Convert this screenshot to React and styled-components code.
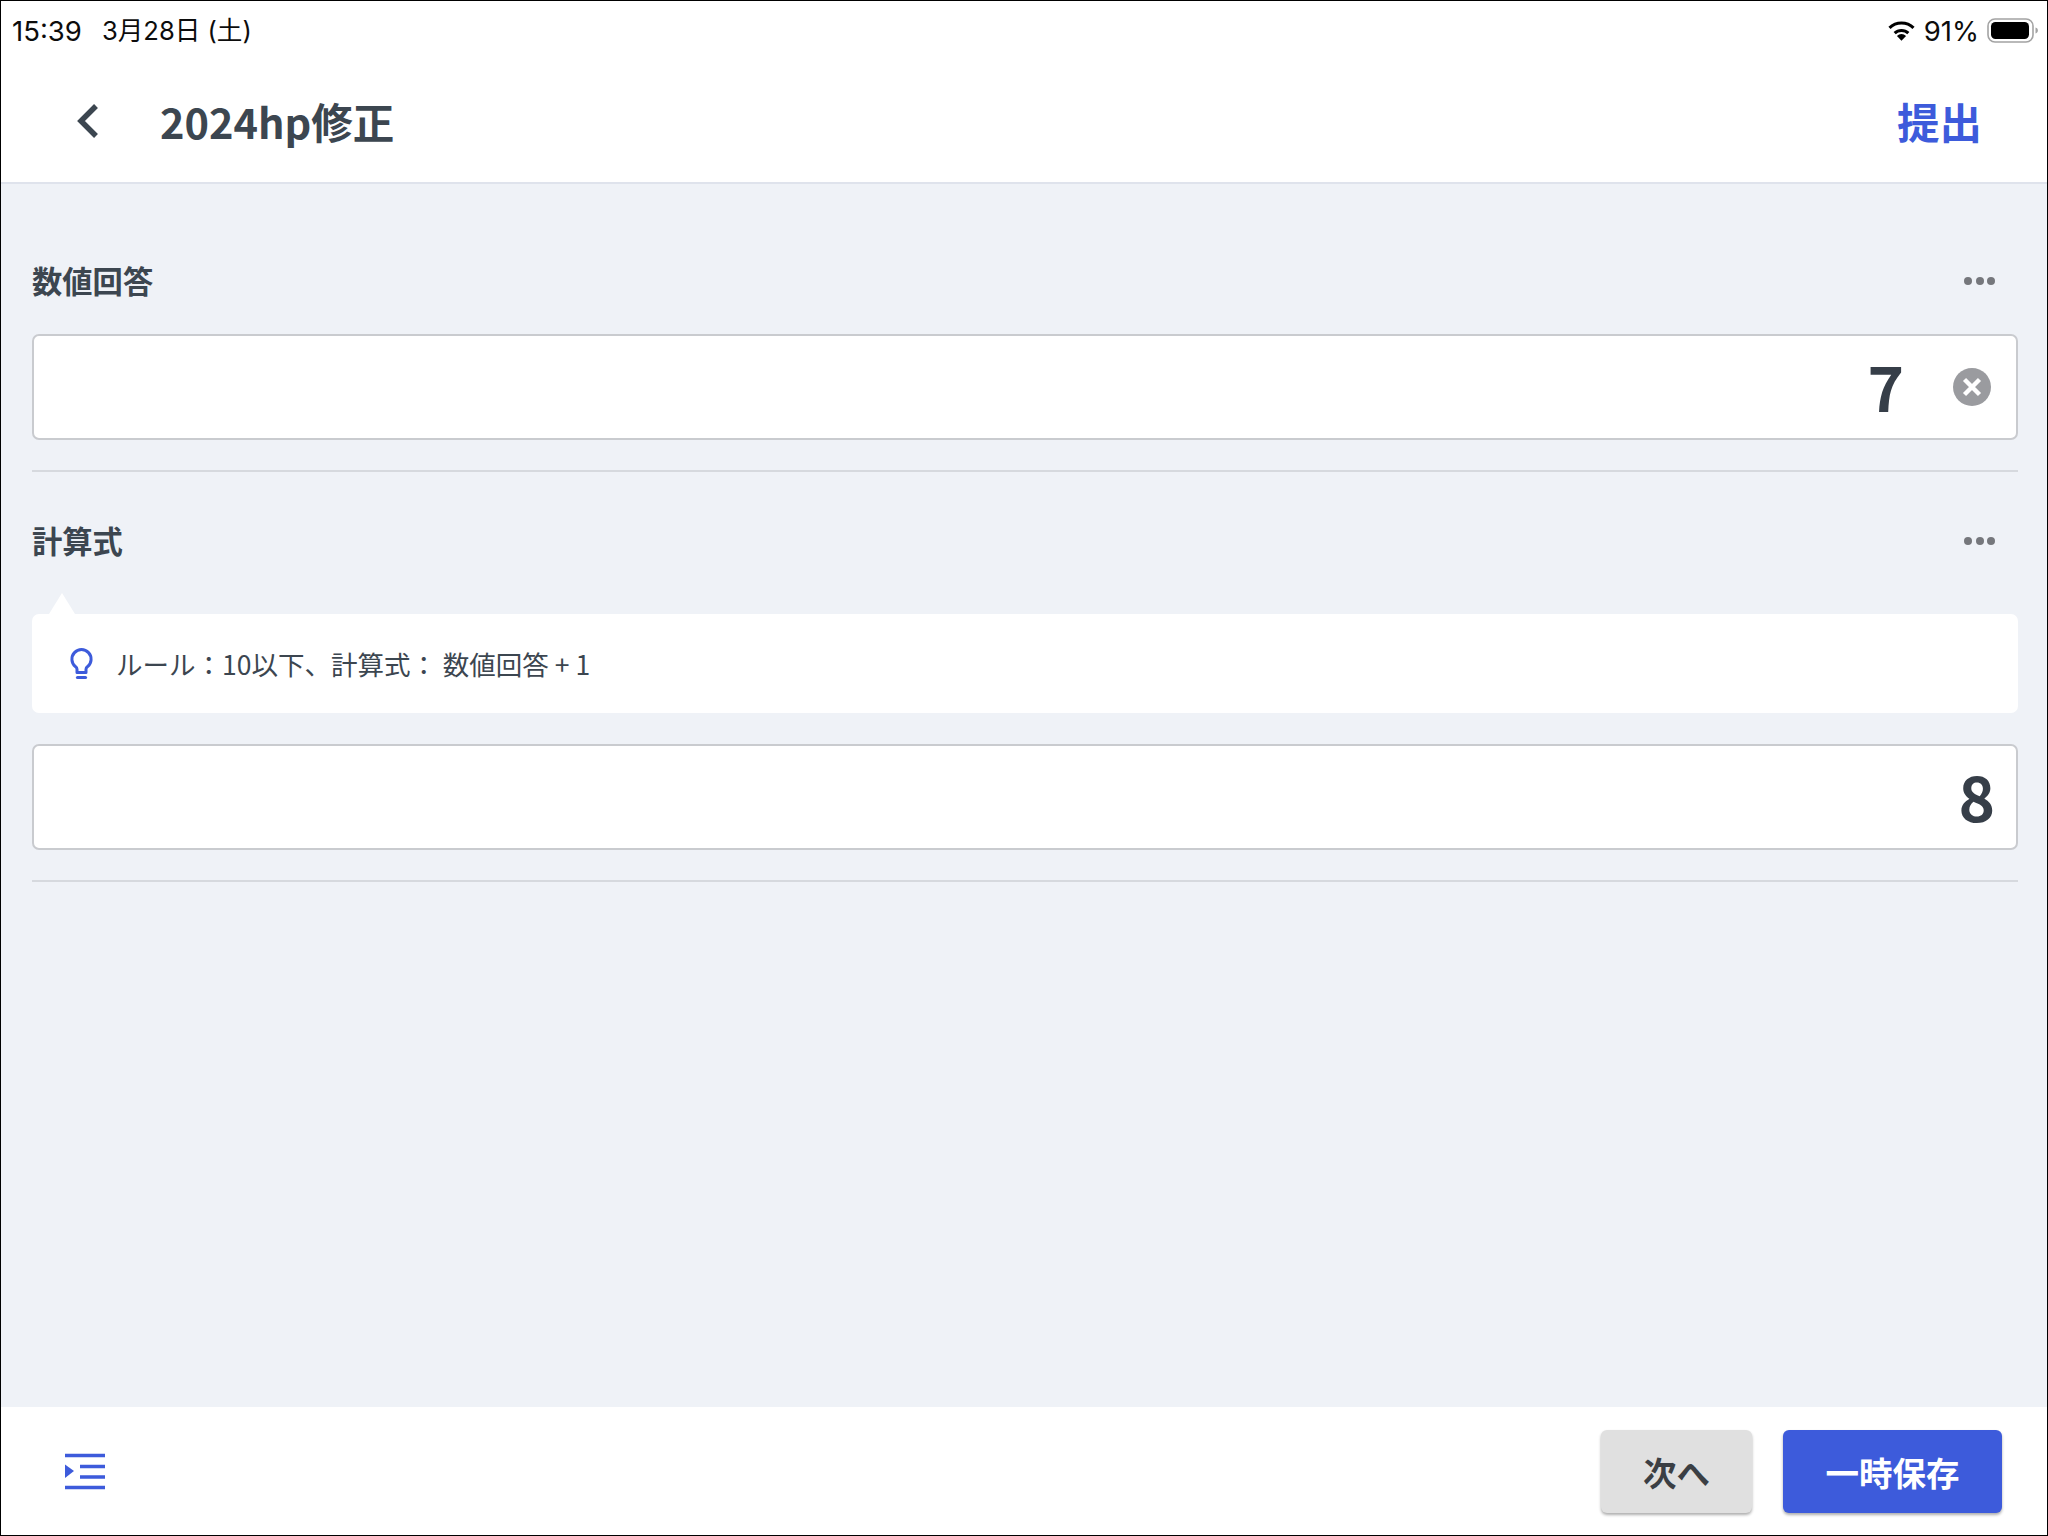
import React from "react";
import styled, { createGlobalStyle } from "styled-components";

const CJK = `"Noto Sans CJK JP", "Noto Sans", sans-serif`;
const INK = "#3c4650";
const BLUE = "#3d5bdb";

const Global = createGlobalStyle`
  html, body { margin: 0; padding: 0; background: #fff; }
  * { box-sizing: border-box; }
`;

const Frame = styled.div`
  width: 2048px;
  height: 1536px;
  border: 1px solid #000;
  display: flex;
  flex-direction: column;
  background: #eff2f7;
  font-family: ${CJK};
  color: ${INK};
  overflow: hidden;
`;

const Top = styled.header`
  height: 183px;
  flex: none;
  background: #fff;
  border-bottom: 2px solid #dfe3ec;
  display: flex;
  flex-direction: column;
`;

const StatusBar = styled.div`
  height: 59px;
  flex: none;
  display: flex;
  align-items: center;
  justify-content: space-between;
  padding: 0 8px 0 11px;
  font-family: Inter, "Noto Sans CJK JP", sans-serif;
  font-size: 27.5px;
  line-height: 34px;
  color: #0c0c0c;
`;

const StatusGroup = styled.div`
  display: flex;
  align-items: center;
  gap: ${(p) => p.$gap || 0}px;
`;

const DateText = styled.span`
  font-size: 25.6px;
  line-height: 34px;
`;

const NavBar = styled.div`
  flex: 1;
  display: flex;
  align-items: center;
  padding: 0 65px 1px 75px;
`;

const BackIcon = styled.svg`
  width: 24px;
  height: 36px;
  flex: none;
  margin-right: 60px;
`;

const Title = styled.h1`
  margin: 0;
  flex: 1;
  font-size: 41.5px;
  line-height: 56px;
  font-weight: 700;
`;

const Submit = styled.button`
  border: 0;
  padding: 0;
  background: none;
  font: 700 42.5px/56px ${CJK};
  color: ${BLUE};
`;

const Main = styled.main`
  flex: 1;
  padding: 0 29px 0 31px;
  display: flex;
  flex-direction: column;
`;

const Section = styled.section`
  padding: ${(p) => p.$top}px 0 30px;
  border-bottom: 2px solid #d6d9de;
`;

const LabelRow = styled.div`
  display: flex;
  align-items: center;
  justify-content: space-between;
  height: 44px;
  margin-bottom: ${(p) => p.$after}px;
`;

const Label = styled.div`
  font-size: 30.3px;
  line-height: 44px;
  font-weight: 700;
`;

const Dots = styled.svg`
  width: 34px;
  height: 10px;
  margin-right: 21px;
  margin-top: 1px;
`;

const Field = styled.div`
  height: 106px;
  background: #fff;
  border: 2px solid #c9cbcf;
  border-radius: 7px;
  display: flex;
  align-items: center;
  justify-content: flex-end;
  padding-right: ${(p) => p.$pad}px;
`;

const Value = styled.div`
  font-size: 62px;
  line-height: 80px;
  font-weight: 700;
  color: #363e48;
  margin-top: -4px;
`;

const Clear = styled.svg`
  width: 38px;
  height: 38px;
  margin-left: 49px;
  flex: none;
`;

const Tip = styled.div`
  position: relative;
  height: 99px;
  background: #fff;
  border-radius: 7px;
  margin-bottom: 31px;
  display: flex;
  align-items: center;
  gap: 21px;
  padding: 0 0 0 37px;
  font-size: 26.5px;
  font-weight: 400;
  color: ${INK};
  &::before {
    content: "";
    position: absolute;
    left: 17px;
    top: -21px;
    border-left: 13px solid transparent;
    border-right: 13px solid transparent;
    border-bottom: 21px solid #fff;
  }
`;

const BulbIcon = styled.svg`
  width: 26px;
  height: 34px;
  flex: none;
`;

const Footer = styled.footer`
  height: 128px;
  flex: none;
  background: #fff;
  display: flex;
  align-items: flex-start;
  justify-content: space-between;
  padding: 23px 45px 0 63px;
`;

const MenuIcon = styled.svg`
  width: 42px;
  height: 38px;
  margin-top: 22px;
`;

const Buttons = styled.div`
  display: flex;
  gap: 31px;
`;

const Btn = styled.button`
  height: 83px;
  width: ${(p) => p.$w}px;
  border: 0;
  border-radius: 6px;
  background: ${(p) => (p.$primary ? BLUE : "#e0e0e0")};
  color: ${(p) => (p.$primary ? "#fff" : "#3b3f44")};
  font: 700 33.5px/1 ${CJK};
  box-shadow: 0 2px 3px rgba(0, 0, 0, 0.32);
`;

const Wifi = () => (
  <svg width="29" height="21" viewBox="0 0 28 20">
    <path d="M14 20l-4.4-4.8a6.4 6.4 0 0 1 8.8 0z" fill="#000" />
    <path d="M7.4 12.6a9.6 9.6 0 0 1 13.2 0" fill="none" stroke="#000" strokeWidth="3" />
    <path d="M2.4 7.4a16.8 16.8 0 0 1 23.2 0" fill="none" stroke="#000" strokeWidth="3" />
  </svg>
);

const Battery = () => (
  <svg width="52" height="26" viewBox="0 0 52 26">
    <rect x="1" y="1" width="45" height="23" rx="7" fill="#fff" stroke="#a3a3a3" strokeWidth="1.6" />
    <rect x="4" y="4" width="38" height="17" rx="4.5" fill="#000" />
    <path d="M48.5 9.5c1.6.4 2.4 1.6 2.4 3s-.8 2.6-2.4 3z" fill="#a3a3a3" />
  </svg>
);

const MoreDots = () => (
  <Dots viewBox="0 0 34 10">
    <circle cx="5" cy="5" r="4" fill="#75777c" />
    <circle cx="17" cy="5" r="4" fill="#75777c" />
    <circle cx="28" cy="5" r="4" fill="#75777c" />
  </Dots>
);

const Bulb = () => (
  <BulbIcon viewBox="0 0 26 34">
    <path
      d="M8 25.5h9v-3.2c0-1.2.6-2 1.6-2.7a9.6 9.6 0 1 0-12.2 0c1 .7 1.6 1.5 1.6 2.7z"
      fill="none"
      stroke={BLUE}
      strokeWidth="3"
      strokeLinejoin="round"
    />
    <path d="M8.5 30.5h8" stroke={BLUE} strokeWidth="3.2" strokeLinecap="round" />
  </BulbIcon>
);

export default function App() {
  return (
    <>
      <Global />
      <Frame>
        <Top>
          <StatusBar>
            <StatusGroup $gap={20}>
              <span>15:39</span>
              <DateText>3月28日 (土)</DateText>
            </StatusGroup>
            <StatusGroup $gap={8}>
              <Wifi />
              <span>91%</span>
              <Battery />
            </StatusGroup>
          </StatusBar>
          <NavBar>
            <BackIcon viewBox="0 0 24 36">
              <path d="M20 3L5 18l15 15" fill="none" stroke={INK} strokeWidth="5.5" />
            </BackIcon>
            <Title>2024hp修正</Title>
            <Submit>提出</Submit>
          </NavBar>
        </Top>
        <Main>
          <Section $top={74}>
            <LabelRow $after={32}>
              <Label>数値回答</Label>
              <MoreDots />
            </LabelRow>
            <Field $pad={25}>
              <Value>7</Value>
              <Clear viewBox="0 0 38 38">
                <circle cx="19" cy="19" r="19" fill="#9a9b9f" />
                <path d="M11.5 11.5l15 15M26.5 11.5l-15 15" stroke="#fff" strokeWidth="4.4" />
              </Clear>
            </Field>
          </Section>
          <Section $top={46}>
            <LabelRow $after={52}>
              <Label>計算式</Label>
              <MoreDots />
            </LabelRow>
            <Tip>
              <Bulb />
              <span>ルール：10以下、計算式： 数値回答 + 1</span>
            </Tip>
            <Field $pad={21}>
              <Value>8</Value>
            </Field>
          </Section>
        </Main>
        <Footer>
          <MenuIcon viewBox="0 0 42 38">
            <path d="M1 3.5h40M16 14.5h25M16 25h25M1 35.5h40" stroke={BLUE} strokeWidth="3.6" />
            <path d="M1 12.5l9 6.5-9 7z" fill={BLUE} />
          </MenuIcon>
          <Buttons>
            <Btn $w={151}>次へ</Btn>
            <Btn $w={219} $primary>一時保存</Btn>
          </Buttons>
        </Footer>
      </Frame>
    </>
  );
}
